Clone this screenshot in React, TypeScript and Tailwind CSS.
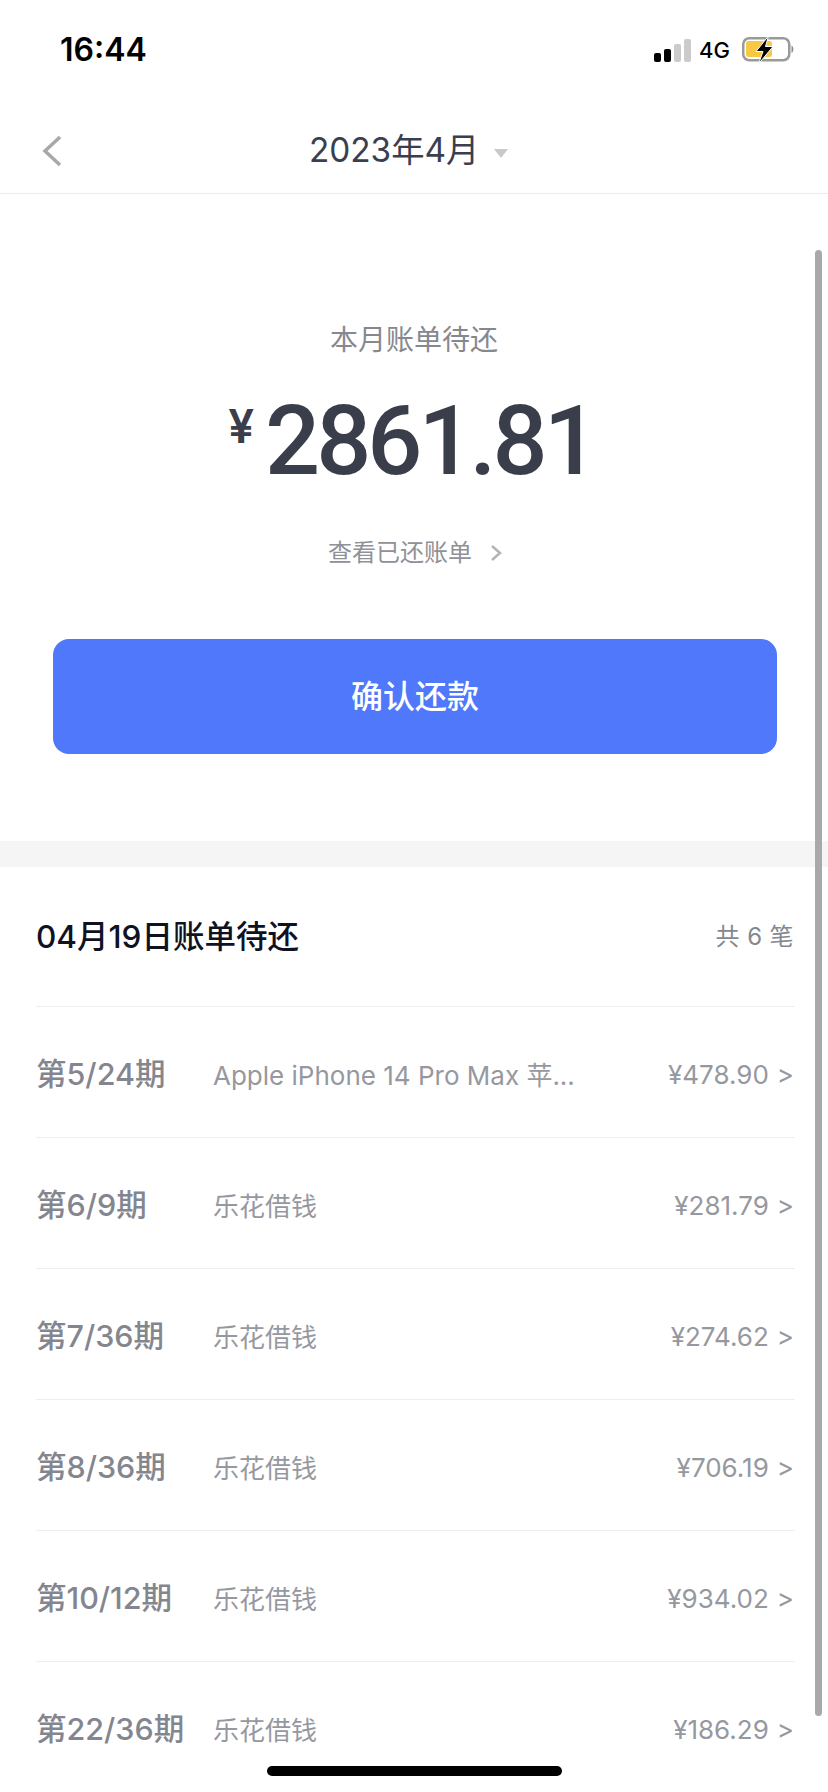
import React from 'react';

const rows = [
  { period: '第5/24期', name: 'Apple iPhone 14 Pro Max 苹...', amount: '¥478.90' },
  { period: '第6/9期', name: '乐花借钱', amount: '¥281.79' },
  { period: '第7/36期', name: '乐花借钱', amount: '¥274.62' },
  { period: '第8/36期', name: '乐花借钱', amount: '¥706.19' },
  { period: '第10/12期', name: '乐花借钱', amount: '¥934.02' },
  { period: '第22/36期', name: '乐花借钱', amount: '¥186.29' },
];

const font = "font-['Inter','Noto_Sans_CJK_SC',sans-serif]";

function StatusIcons() {
  return (
    <div className="flex items-center">
      <svg width="37" height="23" viewBox="0 0 37 23" className="mr-[8px]">
        <rect x="0" y="14" width="7" height="9" rx="2" fill="#000" />
        <rect x="10" y="10" width="7" height="13" rx="2" fill="#000" />
        <rect x="20" y="5" width="7" height="18" rx="2" fill="#cbcbcb" />
        <rect x="30" y="0" width="7" height="23" rx="2" fill="#cbcbcb" />
      </svg>
      <span className="mr-[12px] text-[22px] font-medium leading-none text-black">4G</span>
      <svg width="52" height="28" viewBox="0 0 52 28">
        <rect x="1.25" y="2.25" width="46" height="22" rx="6" fill="none" stroke="#9a9a9a" strokeWidth="2.5" />
        <rect x="4" y="5" width="26" height="16" rx="2.5" fill="#f7c843" />
        <path d="M49.5 9.5 C52 10.5 52 16 49.5 17 Z" fill="#8c8c8c" />
        <path d="M26.5 0 L14 15.5 H21 L16.5 28 L31 10.5 H23.5 Z" fill="#000" stroke="#fff" strokeWidth="1" />
      </svg>
    </div>
  );
}

export default function App() {
  return (
    <div className={`relative h-[1792px] w-[828px] overflow-hidden bg-white ${font}`}>
      {/* Status bar */}
      <div className="flex h-[100px] items-start justify-between pl-[60px] pr-[34px] pt-[33px]">
        <span className="text-[32px] font-semibold leading-[34px] text-black">16:44</span>
        <div className="pt-[3px]">
          <StatusIcons />
        </div>
      </div>

      {/* Nav */}
      <div className="flex h-[94px] items-center border-b border-[#ececec] pl-[42px] pt-[8px]">
        <svg width="20" height="32" viewBox="0 0 20 32" fill="none">
          <path d="M18 2 L3 16 L18 30" stroke="#a8a8a8" strokeWidth="3.5" />
        </svg>
        <div className="ml-[247px] flex items-center">
          <span className="text-[33.3px] leading-none text-[#3a3f50]">2023年4月</span>
          <svg width="14" height="9" viewBox="0 0 14 9" className="ml-[15px] mt-[6px]">
            <path d="M0 0 H14 L7 9 Z" fill="#c8c9cc" />
          </svg>
        </div>
      </div>

      {/* Summary */}
      <div className="flex h-[647px] flex-col items-center pt-[127px]">
        <p className="text-[28px] leading-[38px] text-[#86888f]">本月账单待还</p>
        <div className="mt-[44px] flex items-start pr-[5px]">
          <span className="mr-[11px] text-[46px] font-semibold leading-[46px] text-[#3a3e4b]">¥</span>
          <span className="font-['Roboto'] text-[97px] font-medium leading-[76px] tracking-[-4px] text-[#3a3e4b]">
            2861.81
          </span>
        </div>
        <div className="ml-[2px] mt-[58px] flex items-center">
          <span className="text-[24px] leading-[32px] text-[#8f9197]">查看已还账单</span>
          <svg width="12" height="18" viewBox="0 0 12 18" fill="none" className="ml-[18px]">
            <path d="M2 2 L10 9 L2 16" stroke="#b4b4b4" strokeWidth="2.5" />
          </svg>
        </div>
        <button className="ml-[2px] mt-[70px] flex h-[115px] w-[724px] items-center justify-center rounded-[16px] bg-[#4f79fa] text-[32px] font-medium text-white">
          确认还款
        </button>
      </div>

      <div className="h-[26px] bg-[#f5f5f5]" />

      {/* Bill list */}
      <div className="pl-[36px] pr-[33px]">
        <div className="flex h-[139px] items-center justify-between pt-[1px]">
          <span className="text-[31.5px] font-medium leading-none text-[#0f1222]">04月19日账单待还</span>
          <span className="mr-[1px] text-[24px] leading-none tracking-[0.4px] text-[#86888f]">共 6 笔</span>
        </div>
        {rows.map((row) => (
          <div key={row.period} className="flex h-[131px] items-center border-t border-[#eeeeee] pt-[7px]">
            <span className="mb-[2px] w-[177px] shrink-0 whitespace-nowrap text-[30.5px] font-medium leading-none text-[#84868f]">
              {row.period}
            </span>
            <span className="flex-1 whitespace-nowrap text-[26px] leading-none text-[#96989f]">{row.name}</span>
            <span className="mb-[1px] mr-[1px] flex items-center text-[26px] leading-none text-[#96989f]">
              {row.amount}
              <span className="ml-[8px]">&gt;</span>
            </span>
          </div>
        ))}
      </div>

      {/* Scroll indicator */}
      <div className="absolute left-[815px] top-[250px] h-[1466px] w-[7px] rounded-full bg-[#a9a9a9]" />

      {/* Home indicator */}
      <div className="absolute left-[267px] top-[1766px] h-[10px] w-[295px] rounded-full bg-black" />
    </div>
  );
}
